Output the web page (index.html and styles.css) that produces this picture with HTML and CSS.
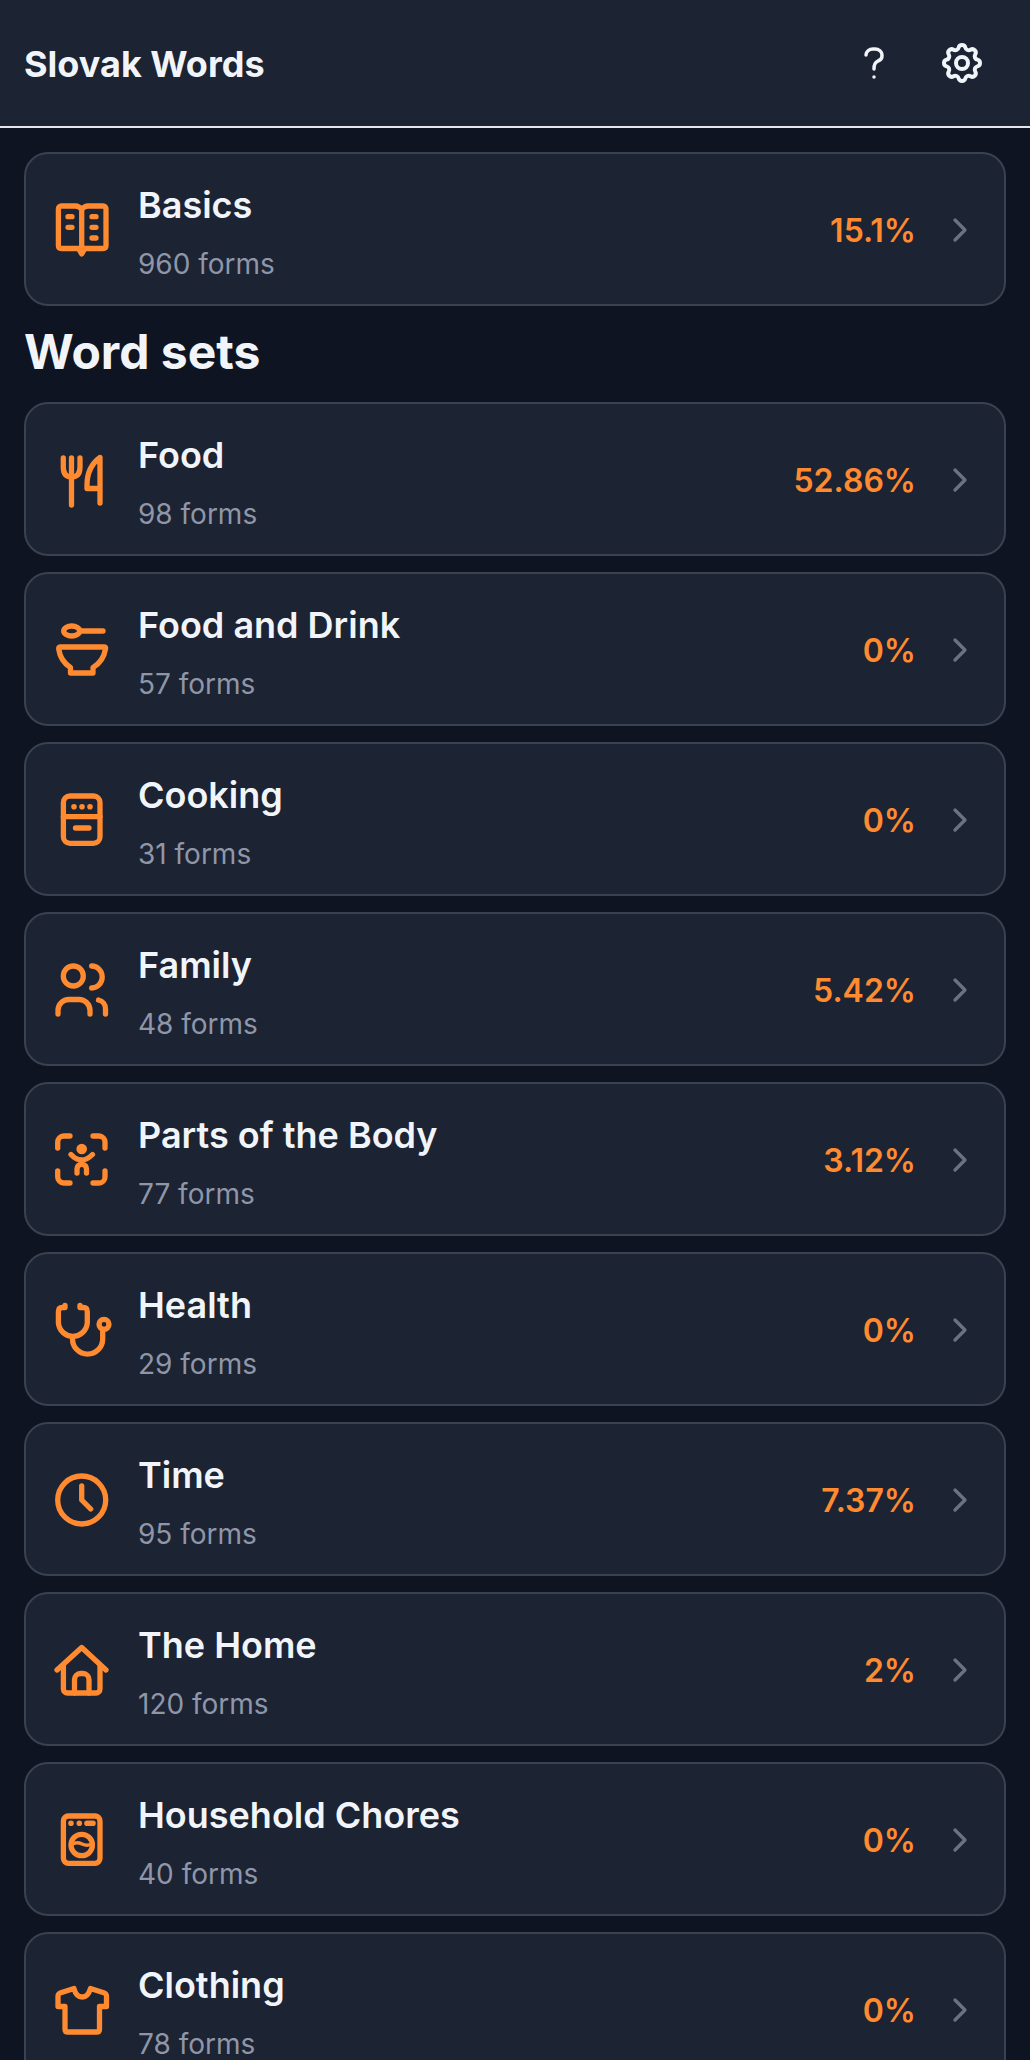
FILE: index.html
```html
<!DOCTYPE html>
<html lang="en">
<head>
    <meta charset="UTF-8"/>
    <meta name="viewport" content="width=device-width, initial-scale=1.0"/>
    <title>Slovak Words</title>
    <link rel="stylesheet" href="styles.css">
</head>
<body>
    <header class="topbar">
        <h1>Slovak Words</h1>
        <div class="topbar-actions">
            <button class="icon-btn" aria-label="Help">
                <svg class="help-icon" viewBox="0 0 24 24"><path d="M8 8a3.5 3 0 0 1 3.5 -3h1a3.5 3 0 0 1 3.5 3a3 3 0 0 1 -2 3a3 4 0 0 0 -2 4"/><path d="M12 19v.01"/></svg>
            </button>
            <button class="icon-btn" aria-label="Settings">
                <svg class="gear-icon" viewBox="0 0 24 24"><path d="M10.325 4.317c.426 -1.756 2.924 -1.756 3.35 0a1.724 1.724 0 0 0 2.573 1.066c1.543 -.94 3.31 .826 2.37 2.37a1.724 1.724 0 0 0 1.065 2.572c1.756 .426 1.756 2.924 0 3.35a1.724 1.724 0 0 0 -1.066 2.573c.94 1.543 -.826 3.31 -2.37 2.37a1.724 1.724 0 0 0 -2.572 1.065c-.426 1.756 -2.924 1.756 -3.35 0a1.724 1.724 0 0 0 -2.573 -1.066c-1.543 .94 -3.31 -.826 -2.37 -2.37a1.724 1.724 0 0 0 -1.065 -2.572c-1.756 -.426 -1.756 -2.924 0 -3.35a1.724 1.724 0 0 0 1.066 -2.573c-.94 -1.543 .826 -3.31 2.37 -2.37c1 .608 2.296 .07 2.572 -1.065z"/><circle cx="12" cy="12" r="3"/></svg>
            </button>
        </div>
    </header>

    <main class="content">
        <a class="card">
            <svg class="card-icon" viewBox="0 0 64 64"><path d="M32.7 12.5Q30 9 26.5 9H12.4Q9.4 9 9.4 12V48.5Q9.4 51.5 12.4 51.5H29.5L32.7 57L35.9 51.5H54Q57 51.5 57 48.5V12Q57 9 54 9H39Q35.4 9 32.7 12.5V51"/><path class="thick" d="M19 19.7H23M19 30.3H23M43 19.7H47M43 30.3H47M43 41H47"/></svg>
            <div class="card-text">
                <div class="card-title">Basics</div>
                <div class="card-sub">960 forms</div>
            </div>
            <span class="card-pct">15.1%</span>
            <svg class="chevron" viewBox="0 0 24 24"><path d="M9 6l6 6l-6 6"/></svg>
        </a>

        <h2>Word sets</h2>

        <a class="card">
            <svg class="card-icon" viewBox="0 0 64 64"><path d="M14.3 11V20Q14.3 30 22.5 30Q31 30 31 20V11M22.5 11V58"/><path d="M51 41.5V10.5Q38 20 38 38V41.5H51V56"/></svg>
            <div class="card-text">
                <div class="card-title">Food</div>
                <div class="card-sub">98 forms</div>
            </div>
            <span class="card-pct">52.86%</span>
            <svg class="chevron" viewBox="0 0 24 24"><path d="M9 6l6 6l-6 6"/></svg>
        </a>

        <a class="card">
            <svg class="card-icon" viewBox="0 0 64 64"><ellipse cx="22.7" cy="14" rx="8" ry="5"/><path d="M31 14H54"/><path d="M11 30H55.5Q57 30 56.5 32C55 41 50 47 44 50.5V56H21.5V50.5C16 47 11 41 9.7 32Q9.5 30 11 30Z"/></svg>
            <div class="card-text">
                <div class="card-title">Food and Drink</div>
                <div class="card-sub">57 forms</div>
            </div>
            <span class="card-pct">0%</span>
            <svg class="chevron" viewBox="0 0 24 24"><path d="M9 6l6 6l-6 6"/></svg>
        </a>

        <a class="card">
            <svg class="card-icon" viewBox="0 0 64 64"><rect x="14.4" y="9" width="36.6" height="47.3" rx="6.5"/><path d="M14.4 29.7H51M26.5 41H40"/><path class="dots" d="M25 19.7v.01M33 19.7v.01M41 19.7v.01"/></svg>
            <div class="card-text">
                <div class="card-title">Cooking</div>
                <div class="card-sub">31 forms</div>
            </div>
            <span class="card-pct">0%</span>
            <svg class="chevron" viewBox="0 0 24 24"><path d="M9 6l6 6l-6 6"/></svg>
        </a>

        <a class="card">
            <svg class="card-icon" viewBox="0 0 64 64"><circle cx="24.3" cy="19" r="10"/><path d="M42.7 9A10.5 11 0 0 1 42.7 31"/><path d="M9 57V53.5A11 11 0 0 1 20 42.5H29.5A11 11 0 0 1 41 53.5V57"/><path d="M49.5 43A9 9 0 0 1 56.5 52V57"/></svg>
            <div class="card-text">
                <div class="card-title">Family</div>
                <div class="card-sub">48 forms</div>
            </div>
            <span class="card-pct">5.42%</span>
            <svg class="chevron" viewBox="0 0 24 24"><path d="M9 6l6 6l-6 6"/></svg>
        </a>

        <a class="card">
            <svg class="card-icon" viewBox="0 0 64 64"><path d="M8.7 21V15A6 6 0 0 1 14.7 9H21M44 9H50A6 6 0 0 1 56 15V21M56 44V50A6 6 0 0 1 50 56H44M21 56H14.7A6 6 0 0 1 8.7 50V44"/><circle class="solid" cx="32.7" cy="22" r="5.3"/><path d="M22 27.5Q27 33 32.7 33Q38 33 43.5 27.5M32.7 33V37M28 46V42Q28 38 32.7 37Q37.5 38 37.5 42V46"/></svg>
            <div class="card-text">
                <div class="card-title">Parts of the Body</div>
                <div class="card-sub">77 forms</div>
            </div>
            <span class="card-pct">3.12%</span>
            <svg class="chevron" viewBox="0 0 24 24"><path d="M9 6l6 6l-6 6"/></svg>
        </a>

        <a class="card">
            <svg class="card-icon" viewBox="0 0 64 64"><path d="M16 8.5V10.5H13.4Q9.4 10.5 9.4 14.5V26A14.5 14.5 0 0 0 38.3 26V14.5Q38.3 10.5 34.3 10.5H31V8.5"/><path d="M23.5 41V42A15 15 0 0 0 53.7 42V33"/><circle cx="55" cy="27.3" r="5"/></svg>
            <div class="card-text">
                <div class="card-title">Health</div>
                <div class="card-sub">29 forms</div>
            </div>
            <span class="card-pct">0%</span>
            <svg class="chevron" viewBox="0 0 24 24"><path d="M9 6l6 6l-6 6"/></svg>
        </a>

        <a class="card">
            <svg class="card-icon" viewBox="0 0 64 64"><circle cx="32.7" cy="33" r="24"/><path d="M32.7 19V33L41.7 42"/></svg>
            <div class="card-text">
                <div class="card-title">Time</div>
                <div class="card-sub">95 forms</div>
            </div>
            <span class="card-pct">7.37%</span>
            <svg class="chevron" viewBox="0 0 24 24"><path d="M9 6l6 6l-6 6"/></svg>
        </a>

        <a class="card">
            <svg class="card-icon" viewBox="0 0 64 64"><path d="M8 33L32.7 10.5L57 33"/><path d="M14.4 29V52A4 4 0 0 0 18.4 56H47A4 4 0 0 0 51 52V29"/><path d="M25.5 56V42.5A6 6 0 0 1 31.5 36.5H34A6 6 0 0 1 40 42.5V56"/></svg>
            <div class="card-text">
                <div class="card-title">The Home</div>
                <div class="card-sub">120 forms</div>
            </div>
            <span class="card-pct">2%</span>
            <svg class="chevron" viewBox="0 0 24 24"><path d="M9 6l6 6l-6 6"/></svg>
        </a>

        <a class="card">
            <svg class="card-icon" viewBox="0 0 64 64"><rect x="14.4" y="9" width="36.6" height="47.3" rx="5"/><path class="dots" d="M22 16.3v.01M30.3 16.3v.01M38 16.3H44"/><circle cx="32.7" cy="38" r="10.7"/><path class="wave" d="M22 38Q27 34 33 37T44 36"/></svg>
            <div class="card-text">
                <div class="card-title">Household Chores</div>
                <div class="card-sub">40 forms</div>
            </div>
            <span class="card-pct">0%</span>
            <svg class="chevron" viewBox="0 0 24 24"><path d="M9 6l6 6l-6 6"/></svg>
        </a>

        <a class="card">
            <svg class="card-icon" viewBox="0 0 64 64"><path d="M25 11.5L11 16Q9 17 9 19V29.5H16V52.5Q16 55 18.5 55H48Q50.5 55 50.5 52.5V29.5H57.5V19Q57.5 17 55.5 16L41.5 11.5Q39 20 33.3 20Q27 20 25 11.5Z"/></svg>
            <div class="card-text">
                <div class="card-title">Clothing</div>
                <div class="card-sub">78 forms</div>
            </div>
            <span class="card-pct">0%</span>
            <svg class="chevron" viewBox="0 0 24 24"><path d="M9 6l6 6l-6 6"/></svg>
        </a>
    </main>
</body>
</html>
```

FILE: styles.css
```css
html, body {
    margin: 0;
    height: 100%;
    overflow: hidden;
}

body {
    font-family: Inter, "Liberation Sans", sans-serif;
    background: #0e1421;
    color: #f1f5f9;
}

.topbar {
    display: flex;
    align-items: center;
    justify-content: space-between;
    height: 126px;
    padding: 0 36px 0 24px;
    background: #1c2333;
    border-bottom: 2px solid #e5e7eb;
}

.topbar h1 {
    margin: 2px 0 0;
    font-size: 36px;
    font-weight: 700;
}

.topbar-actions {
    display: flex;
    gap: 24px;
}

.icon-btn {
    display: flex;
    padding: 8px;
    background: none;
    border: none;
}

.icon-btn svg {
    width: 48px;
    height: 48px;
    fill: none;
    stroke: #f1f5f9;
    stroke-width: 2;
    stroke-linecap: round;
    stroke-linejoin: round;
}

.icon-btn .help-icon {
    stroke-width: 1.75;
}

.content {
    display: flex;
    flex-direction: column;
    gap: 16px;
    padding: 24px;
}

.content h2 {
    margin: -2px 0 2px;
    font-size: 48px;
    line-height: 64px;
    font-weight: 700;
}

.card {
    display: flex;
    flex: none;
    align-items: center;
    height: 154px;
    box-sizing: border-box;
    padding: 0 24px;
    background: #1c2333;
    border: 2px solid #3a4150;
    border-radius: 24px;
}

.card-icon {
    flex: none;
    width: 64px;
    height: 64px;
    margin: 0 25px 0 -1px;
    fill: none;
    stroke: #ff8a2f;
    stroke-width: 5.3;
    stroke-linecap: round;
    stroke-linejoin: round;
}

.card-icon .solid {
    fill: #ff8a2f;
    stroke: none;
}

.card-icon .dots {
    stroke-width: 5.6;
}

.card-icon .thick {
    stroke-width: 5.3;
}

.card-icon .wave {
    stroke-width: 3.5;
}

.card-text {
    flex: 1;
    padding-top: 5px;
}

.card-title {
    font-size: 36px;
    line-height: 48px;
    font-weight: 600;
}

.card-sub {
    margin-top: 17px;
    font-size: 28px;
    line-height: 36px;
    color: #8f96a8;
}

.card-pct {
    margin: 2px 24px 0 0;
    font-size: 32px;
    font-weight: 600;
    color: #ff8a2f;
}

.chevron {
    flex: none;
    width: 40px;
    height: 40px;
    margin-top: 2px;
    fill: none;
    stroke: #6b7280;
    stroke-width: 2;
    stroke-linecap: round;
    stroke-linejoin: round;
}
```
